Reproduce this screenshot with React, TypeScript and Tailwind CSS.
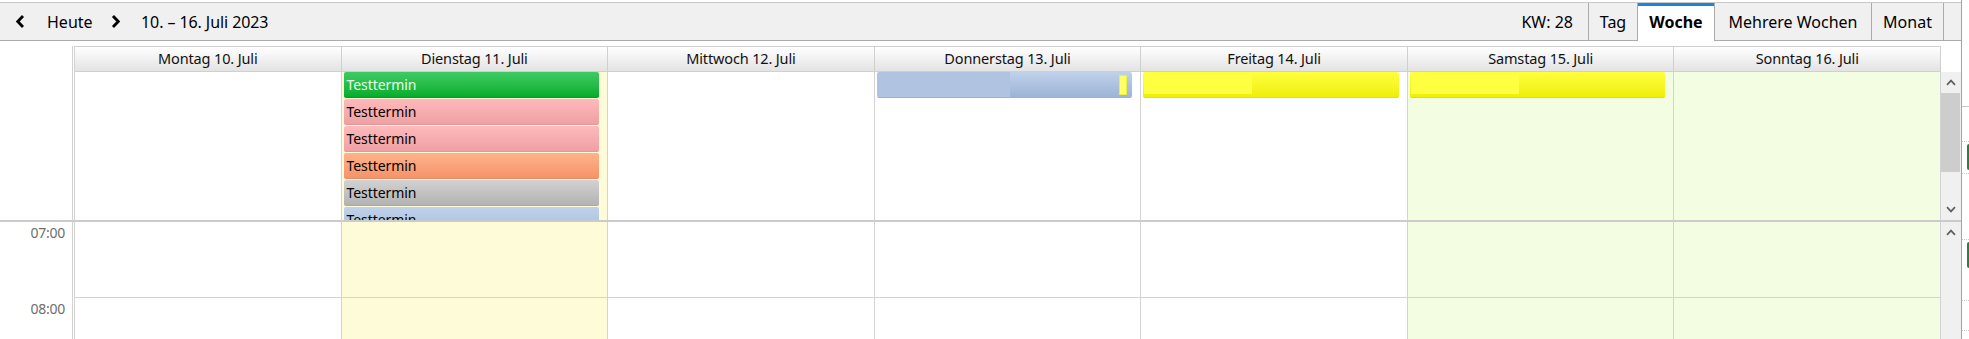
import React from "react";

type Day = { label: string; bg: string };

const days: Day[] = [
  { label: "Montag 10. Juli", bg: "bg-white" },
  { label: "Dienstag 11. Juli", bg: "bg-[#fefbd8]" },
  { label: "Mittwoch 12. Juli", bg: "bg-white" },
  { label: "Donnerstag 13. Juli", bg: "bg-white" },
  { label: "Freitag 14. Juli", bg: "bg-white" },
  { label: "Samstag 15. Juli", bg: "bg-[#f3fde2]" },
  { label: "Sonntag 16. Juli", bg: "bg-[#f3fde2]" },
];

const tuesdayEvents = [
  { cls: "bg-linear-to-b from-[#3ccb62] to-[#02ad2b] text-[#e9ffe9] border-b border-[#0a9a2c]" },
  { cls: "bg-linear-to-b from-[#ffbabc] to-[#efa0a2] text-black border-b border-[#e79597]" },
  { cls: "bg-linear-to-b from-[#ffbabc] to-[#efa0a2] text-black border-b border-[#e79597]" },
  { cls: "bg-linear-to-b from-[#ffb38b] to-[#f5936a] text-black border-b border-[#ea8a60]" },
  { cls: "bg-linear-to-b from-[#d2d2d2] to-[#b3b3b3] text-black border-b border-[#a9a9a9]" },
  { cls: "bg-linear-to-b from-[#c0d2ea] to-[#a9bfdc] text-black border-b border-[#9fb5d6]" },
];

function ChevronLeft() {
  return (
    <svg width="9" height="13" viewBox="0 0 9 13" className="block">
      <polyline points="7,1 1.8,6.5 7,12" fill="none" stroke="#000" strokeWidth="2.8" strokeLinejoin="miter" />
    </svg>
  );
}

function ChevronRight() {
  return (
    <svg width="9" height="13" viewBox="0 0 9 13" className="block">
      <polyline points="2,1 7.2,6.5 2,12" fill="none" stroke="#000" strokeWidth="2.8" strokeLinejoin="miter" />
    </svg>
  );
}

function ScrollUp() {
  return (
    <svg width="10" height="7" viewBox="0 0 10 7" className="block">
      <polyline points="1,5.8 5,1.6 9,5.8" fill="none" stroke="#606060" strokeWidth="1.7" />
    </svg>
  );
}

function ScrollDown() {
  return (
    <svg width="10" height="7" viewBox="0 0 10 7" className="block">
      <polyline points="1,1.2 5,5.4 9,1.2" fill="none" stroke="#606060" strokeWidth="1.7" />
    </svg>
  );
}

function YellowEvent() {
  return (
    <div className="h-[26px] shrink-0 rounded-[2px] flex items-stretch pt-[1px] pl-[1px] pb-[3px] bg-linear-to-b from-[#ffff3c] to-[#efef00] border-b border-[#e2e200]">
      <div className="w-[108px] bg-[#ffff42]" />
    </div>
  );
}

function BlueEvent() {
  return (
    <div className="h-[26px] shrink-0 rounded-[2px] flex items-stretch overflow-hidden border-b border-[#9cb2d3]">
      <div className="w-[133px] bg-[#b0c4e2]" />
      <div className="flex-1 flex items-center justify-end pr-[5px] bg-linear-to-b from-[#c0d2eb] to-[#9db4d6]">
        <div className="w-[8px] h-[20px] bg-[#ffff66] border border-[#eeee40]" />
      </div>
    </div>
  );
}

function AllDayCell({ index }: { index: number }) {
  const d = days[index];
  return (
    <div className={`${d.bg} border-r border-[#d3d3d3] overflow-hidden flex flex-col gap-[1px] pl-[2px] pr-[8px]`}>
      {index === 1 &&
        tuesdayEvents.map((e, i) => (
          <div
            key={i}
            className={`h-[26px] shrink-0 rounded-[2px] flex items-center pl-[3px] text-[14px] tracking-[-0.005em] ${e.cls}`}
          >
            Testtermin
          </div>
        ))}
      {index === 3 && <BlueEvent />}
      {(index === 4 || index === 5) && <YellowEvent />}
    </div>
  );
}

export default function App() {
  return (
    <div className="flex w-[1969px] h-[339px] overflow-hidden bg-white text-black font-['Noto_Sans',sans-serif]">
      {/* main area */}
      <div className="flex flex-col w-[1961px] pt-[2px]">
        {/* toolbar */}
        <div className="flex items-stretch h-[39px] shrink-0 bg-[#f0f0f0] border-t border-b border-t-[#c8c8c8] border-b-[#ababab]">
          <div className="flex items-center">
            <span className="ml-[16px]">
              <ChevronLeft />
            </span>
            <span className="ml-[22px] w-[46px] text-[16px] whitespace-nowrap">Heute</span>
            <span className="ml-[18px]">
              <ChevronRight />
            </span>
            <span className="ml-[21px] text-[16px] tracking-[-0.005em] whitespace-nowrap">10. – 16. Juli 2023</span>
          </div>
          <div className="ml-auto mr-[17px] flex items-stretch text-[16px]">
            <div className="flex items-center pr-[15px] border-r border-[#ababab] whitespace-nowrap">KW: 28</div>
            <div className="w-[49px] flex items-center justify-center border-r border-[#ababab]">Tag</div>
            <div className="relative w-[77px] -mb-px flex items-center justify-center bg-white border-r border-[#ababab] font-bold">
              <span className="absolute top-0 left-0 right-0 h-[3px] bg-[#1c84e0]" />
              Woche
            </div>
            <div className="w-[157px] flex items-center justify-center border-r border-[#ababab] whitespace-nowrap">Mehrere Wochen</div>
            <div className="w-[72px] flex items-center justify-center border-r border-[#ababab]">Monat</div>
          </div>
        </div>

        <div className="h-[5px] shrink-0" />

        {/* header band */}
        <div className="flex h-[26px] shrink-0">
          <div className="w-[72px]" />
          <div className="w-[3px] border-l border-r border-[#d2d2d2]" />
          <div className="grid grid-cols-7 w-[1866px] border-t border-b border-[#d0d0d0]">
            {days.map((d) => (
              <div
                key={d.label}
                className="border-r border-[#d0d0d0] bg-linear-to-b from-white to-[#e3e3e3] flex items-center justify-center text-[14.5px] tracking-[-0.01em] text-[#111] whitespace-nowrap"
              >
                {d.label}
              </div>
            ))}
          </div>
          <div className="w-[20px]" />
        </div>

        {/* all-day band */}
        <div className="flex h-[148px] shrink-0">
          <div className="w-[72px]" />
          <div className="w-[3px] border-l border-r border-[#d2d2d2]" />
          <div className="grid grid-cols-7 w-[1866px]">
            {days.map((d, i) => (
              <AllDayCell key={d.label} index={i} />
            ))}
          </div>
          <div className="w-[20px] bg-[#f0f0f0] flex flex-col">
            <div className="h-[21px] flex items-center justify-center">
              <ScrollUp />
            </div>
            <div className="h-[79px] mr-px bg-[#cdcdcd]" />
            <div className="flex-1" />
            <div className="h-[22px] flex items-center justify-center">
              <ScrollDown />
            </div>
          </div>
        </div>

        {/* separator */}
        <div className="h-[2px] shrink-0 bg-[#cbcbcb]" />

        {/* time band */}
        <div className="flex flex-1 min-h-0 overflow-hidden">
          <div className="w-[72px] flex flex-col">
            {["07:00", "08:00"].map((t) => (
              <div key={t} className="h-[76px] shrink-0 pt-[1px] pr-[7px] text-right text-[14px] leading-[19px] tracking-[-0.02em] text-[#6e6e6e]">
                {t}
              </div>
            ))}
          </div>
          <div className="w-[3px] border-l border-r border-[#d2d2d2]" />
          <div className="grid grid-cols-7 w-[1866px]">
            {days.map((d) => (
              <div key={d.label} className={`${d.bg} border-r border-[#d3d3d3] flex flex-col`}>
                <div className="h-[76px] shrink-0 border-b border-[#d3d3d3]" />
                <div className="h-[76px] shrink-0 border-b border-[#d3d3d3]" />
              </div>
            ))}
          </div>
          <div className="w-[20px] bg-[#f0f0f0] flex flex-col">
            <div className="h-[21px] flex items-center justify-center">
              <ScrollUp />
            </div>
          </div>
        </div>
      </div>

      {/* right edge line */}
      <div className="w-px h-full bg-[#a3a3a3]" />

      {/* side strip */}
      <div className="w-[7px] flex flex-col">
        <div className="h-[106px] shrink-0" />
        <div className="h-px shrink-0 bg-[#c8c8c8]" />
        <div className="h-[35px] shrink-0 border-b border-dotted border-[#c8c8c8]" />
        <div className="h-[2px] shrink-0" />
        <div className="h-[26px] shrink-0 ml-[5px] border-l-2 border-t border-b border-[#2f7d3a] rounded-l-[2px]" />
        <div className="h-[4px] shrink-0 border-b border-dotted border-[#c8c8c8]" />
        <div className="h-[66px] shrink-0 border-b border-dotted border-[#c8c8c8]" />
        <div className="h-[2px] shrink-0" />
        <div className="h-[26px] shrink-0 ml-[5px] border-l-2 border-t border-b border-[#2f7d3a] rounded-l-[2px]" />
        <div className="h-[33px] shrink-0 border-b border-dotted border-[#c8c8c8]" />
        <div className="h-[30px] shrink-0 border-b border-dotted border-[#c8c8c8]" />
      </div>
    </div>
  );
}
